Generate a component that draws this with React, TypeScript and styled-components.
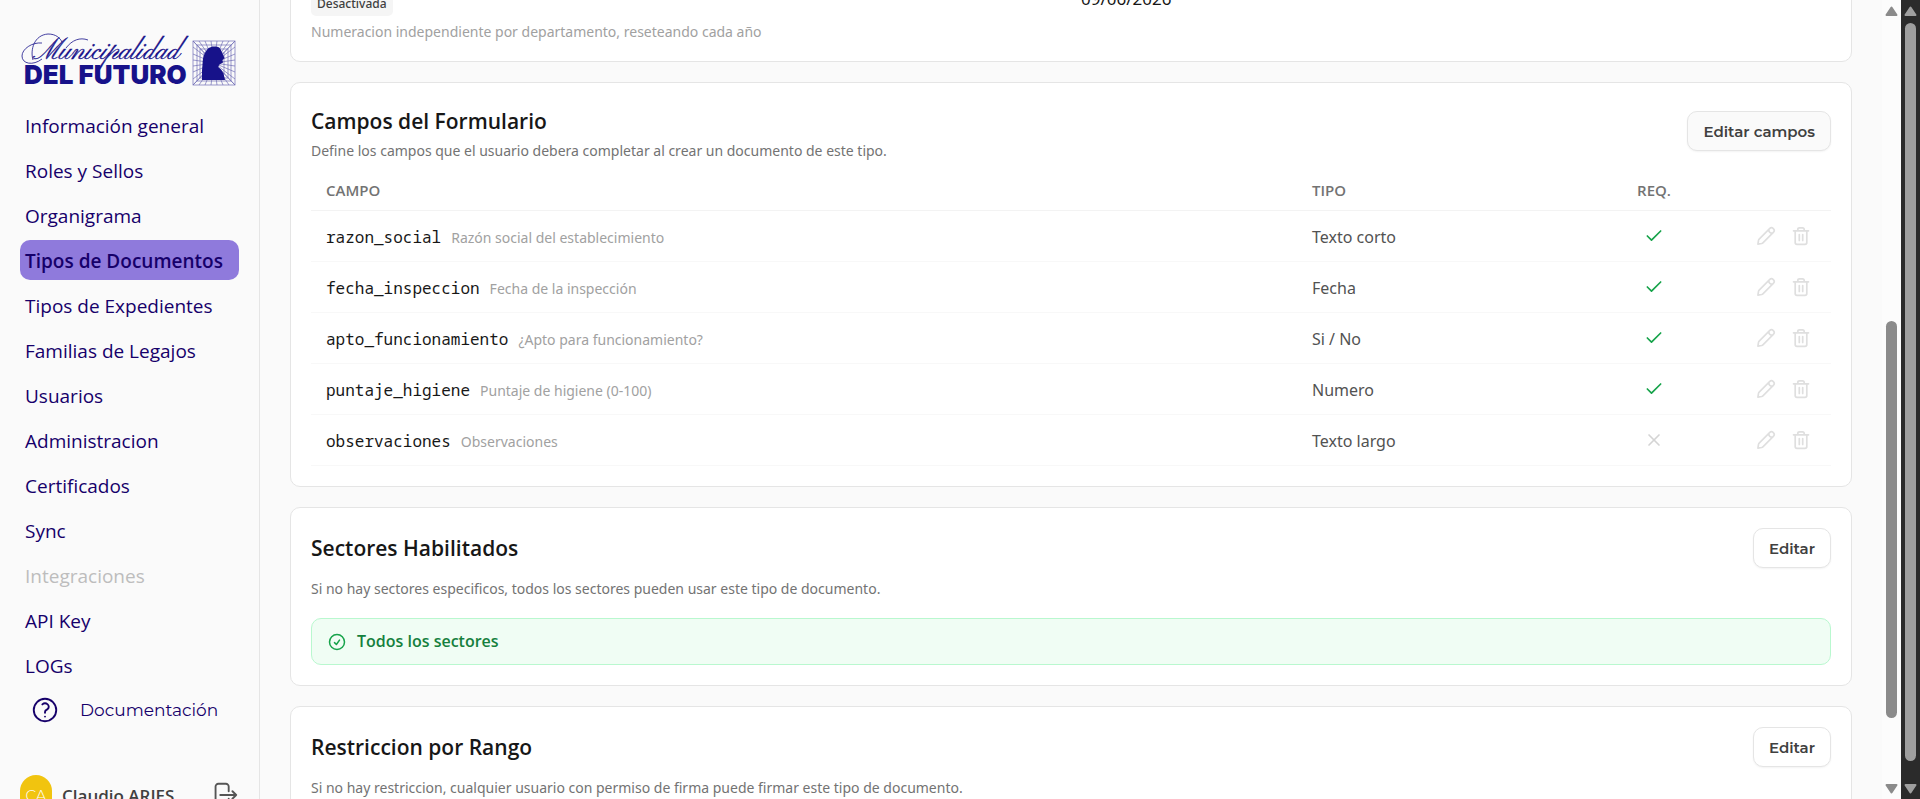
import React from 'react';
import styled, { createGlobalStyle, css } from 'styled-components';
import { Check, X } from 'lucide-react';

const sans = '"Noto Sans", "Open Sans", sans-serif';
const heading = '"Open Sans", "Noto Sans", sans-serif';
const display = 'Montserrat, Inter, sans-serif';
const mono = '"Noto Sans Mono", "Liberation Mono", monospace';

const GlobalStyle = createGlobalStyle`
  *, *::before, *::after { box-sizing: border-box; }
  body { margin: 0; background: #fafafa; font-family: ${sans}; color: #171717; }
  h2, p, ul { margin: 0; padding: 0; }
`;

const Page = styled.div`
  display: flex;
  height: 100vh;
  overflow: hidden;
`;

/* ---------- Sidebar ---------- */

const Sidebar = styled.aside`
  flex: none;
  width: 260px;
  display: flex;
  flex-direction: column;
  padding: 30px 20px 0;
  border-right: 1px solid #e5e5e5;
  overflow: hidden;
`;

const Logo = styled.svg`
  flex: none;
  display: block;
  width: 100%;
  height: 60px;
  overflow: visible;
`;

const NavList = styled.ul`
  flex: none;
  display: flex;
  flex-direction: column;
  gap: 5px;
  margin-top: 15px;
  list-style: none;
`;

const NavLink = styled.a<{ $active?: boolean; $disabled?: boolean }>`
  display: block;
  height: 40px;
  padding: 0 5px;
  border-radius: 10px;
  font-family: ${heading};
  font-size: 19px;
  line-height: 42px;
  white-space: nowrap;
  text-decoration: none;
  color: ${(p) => (p.$disabled ? '#bdbdbd' : '#16006a')};
  ${(p) =>
    p.$active &&
    css`
      background: #8f7adc;
      font-weight: 600;
    `}
`;

const DocsLink = styled.a`
  flex: none;
  display: flex;
  align-items: center;
  gap: 20px;
  height: 40px;
  margin-top: 5px;
  padding-left: 10px;
  font-family: ${display};
  font-size: 17px;
  font-weight: 400;
  color: #16006a;
  text-decoration: none;
`;

const UserRow = styled.div`
  flex: none;
  display: flex;
  align-items: center;
  height: 40px;
  margin-top: 45px;
`;

const Avatar = styled.span`
  display: flex;
  align-items: center;
  justify-content: center;
  width: 32px;
  height: 40px;
  border-radius: 16px;
  background: #f1c40f;
  color: #fff;
  font-family: ${display};
  font-size: 15px;
  font-weight: 300;
`;

const UserName = styled.span`
  flex: 1;
  margin-left: 10px;
  font-family: ${heading};
  font-size: 17px;
  font-weight: 600;
  color: #404040;
`;

const PlainButton = styled.button`
  display: flex;
  align-items: center;
  justify-content: center;
  width: 30px;
  height: 30px;
  padding: 0;
  border: 0;
  background: none;
  color: #555;
`;

const StrokeIcon = styled.svg<{ $size: number; $stroke?: number }>`
  flex: none;
  display: block;
  width: ${(p) => p.$size}px;
  height: ${(p) => p.$size}px;
  fill: none;
  stroke: currentColor;
  stroke-width: ${(p) => p.$stroke ?? 1.5};
  stroke-linecap: round;
  stroke-linejoin: round;
`;

/* ---------- Content ---------- */

const Main = styled.main`
  flex: 1;
  min-width: 0;
  padding: 0 30px;
  overflow: hidden;
`;

/* Scrolled so that the first card is partly above the window. */
const Scrolled = styled.div`
  display: flex;
  flex-direction: column;
  gap: 20px;
  margin-top: -35px;
`;

const Card = styled.section`
  padding: 20px;
  border: 1px solid #e5e5e5;
  border-radius: 10px;
  background: #fff;
`;

const InfoGrid = styled.div`
  display: grid;
  grid-template-columns: 1fr 1fr;
  gap: 20px;
  align-items: end;
  height: 30px;
`;

const Badge = styled.span`
  justify-self: start;
  padding: 0 6px;
  border-radius: 5px;
  background: #f5f5f5;
  color: #404040;
  font-size: 12px;
  font-weight: 500;
  line-height: 24px;
`;

const DateValue = styled.span`
  align-self: start;
  font-size: 17px;
  line-height: 26px;
`;

const Note = styled.p`
  padding-top: 7px;
  font-size: 14px;
  line-height: 18px;
  color: #a1a1a1;
`;

const CardHeader = styled.header<{ $top?: boolean }>`
  display: flex;
  align-items: ${(p) => (p.$top ? 'flex-start' : 'center')};
  justify-content: space-between;
`;

const Title = styled.h2`
  font-family: ${heading};
  font-size: 21px;
  font-weight: 600;
  line-height: 36px;
`;

const Description = styled.p<{ $spaced?: boolean }>`
  margin: ${(p) => (p.$spaced ? '9px 0 17px' : '0')};
  font-size: 14px;
  line-height: 24px;
  color: #737373;
`;

const Button = styled.button<{ $muted?: boolean }>`
  height: 40px;
  margin-top: ${(p) => (p.$muted ? '8px' : '0')};
  padding: 0 15px;
  border: 1px solid #e5e5e5;
  border-radius: 10px;
  background: ${(p) => (p.$muted ? '#fafafa' : '#fff')};
  box-shadow: 0 1px 2px rgba(0, 0, 0, 0.05);
  font-family: ${display};
  font-size: 15px;
  font-weight: 600;
  color: #404040;
`;

const Table = styled.table`
  width: 100%;
  margin-top: 8px;
  table-layout: fixed;
  border-collapse: separate;
  border-spacing: 0;
`;

const HeadCell = styled.th<{ $width?: number; $center?: boolean }>`
  width: ${(p) => (p.$width ? `${p.$width}px` : 'auto')};
  height: 40px;
  padding: 0 15px 2px;
  border-bottom: 1px solid #f3f3f3;
  font-family: ${heading};
  font-size: 15px;
  font-weight: 600;
  text-align: ${(p) => (p.$center ? 'center' : 'left')};
  color: #737373;
`;

const Cell = styled.td`
  height: 51px;
  padding: 0 15px;
  border-bottom: 1px solid #f8f8f8;
  font-size: 16px;
  color: #525252;
`;

const TextCell = styled(Cell)`
  padding-top: 2px;
`;

const FieldName = styled.code`
  margin-right: 10px;
  font-family: ${mono};
  font-size: 16px;
  color: #171717;
`;

const FieldLabel = styled.span`
  font-size: 14px;
  color: #a1a1a1;
`;

const Flag = styled.span<{ $on: boolean }>`
  display: flex;
  justify-content: center;
  color: ${(p) => (p.$on ? '#16a34a' : '#d4d4d4')};
`;

const RowActions = styled.div`
  display: flex;
  justify-content: flex-end;
  gap: 5px;
`;

const RowButton = styled(PlainButton)`
  color: #dfdfdf;
`;

const Notice = styled.div`
  display: flex;
  align-items: center;
  gap: 10px;
  padding: 10px 15px;
  border: 1px solid #b9f8cf;
  border-radius: 10px;
  background: #f0fdf4;
  color: #16a34a;
`;

const NoticeText = styled.span`
  font-family: ${heading};
  font-size: 16px;
  font-weight: 600;
  line-height: 25px;
  color: #15803d;
`;

/* ---------- Scroll bars ---------- */

const ScrollBar = styled.div<{ $dark?: boolean }>`
  flex: none;
  display: flex;
  flex-direction: column;
  align-items: center;
  width: 19px;
  background: ${(p) => (p.$dark ? '#2b2b2b' : '#fcfcfc')};
  color: ${(p) => (p.$dark ? '#9f9f9f' : '#8b8b8b')};
`;

const Arrow = styled.svg`
  flex: none;
  width: 19px;
  height: 23px;
  fill: currentColor;
  stroke: currentColor;
  stroke-width: 2;
  stroke-linejoin: round;
`;

const Gap = styled.div<{ $share: number }>`
  flex: ${(p) => p.$share} 0 0;
`;

const Thumb = styled.div<{ $share: number }>`
  flex: ${(p) => p.$share} 0 0;
  width: 11px;
  border-radius: 6px;
  background: currentColor;
`;

function Scroll({ before, thumb, after, dark }: { before: number; thumb: number; after: number; dark?: boolean }) {
  return (
    <ScrollBar $dark={dark} aria-hidden="true">
      <Arrow viewBox="0 0 19 23"><path d="M9.5 7.5 14.5 15h-10z" /></Arrow>
      <Gap $share={before} />
      <Thumb $share={thumb} />
      <Gap $share={after} />
      <Arrow viewBox="0 0 19 23"><path d="M9.5 16.5 4.5 9h10z" /></Arrow>
    </ScrollBar>
  );
}

/* ---------- Drawings ---------- */

const ink = '#17128a';

function BrandLogo() {
  const rays = [173, 179, 185, 191, 197, 203, 209, 215];
  const rows = [11, 17, 24, 30, 36, 42, 49, 55];
  return (
    <Logo viewBox="0 0 219 60" preserveAspectRatio="xMinYMin meet" role="img" aria-label="Municipalidad del Futuro">
      <path
        fill="none"
        stroke={ink}
        strokeWidth="0.8"
        d="M22 13C12 12 2 19 2 26C2 34 13 36 22 29M13 30C10 20 14 5 28 4C36 4 40 8 42 12M46 18C52 10 60 7 68 10"
      />
      <text x="13" y="29" fontFamily="'Pinyon Script', 'Great Vibes', 'Liberation Serif', serif" fontSize="28" fill={ink} stroke={ink} strokeWidth="0.3">
        Municipalidad
      </text>
      <text x="4" y="54" fontFamily="Inter, sans-serif" fontWeight="900" fontSize="26" fill={ink}>
        DEL FUTURO
      </text>
      <g stroke={ink} fill="none" strokeWidth="0.7" opacity="0.6">
        <rect x="173" y="11" width="42" height="44" />
        <rect x="177" y="15" width="34" height="36" />
        <rect x="180" y="19" width="28" height="29" />
        <rect x="184" y="23" width="20" height="21" />
        {rays.map((x) => <path key={x} d={`M${x} 11 194 33M${x} 55 194 33`} />)}
        {rows.map((y) => <path key={y} d={`M173 ${y} 194 33M215 ${y} 194 33`} />)}
      </g>
      <path
        fill={ink}
        d="M182 50V40C183 34 182 28 185 23C187 18 191 16 195 16.500C199 16 201 19 202 22.500L204.500 28L202.500 30L203 32.500L199.500 34.500L198 37L201 39.500L203.500 43.500L205 50Z"
      />
    </Logo>
  );
}

const QuestionIcon = () => (
  <StrokeIcon $size={30} viewBox="0 0 24 24">
    <path d="M9.879 7.519c1.171-1.025 3.071-1.025 4.242 0 1.172 1.025 1.172 2.687 0 3.712-.203.179-.43.326-.67.442-.745.361-1.45.999-1.45 1.827v.75M21 12a9 9 0 1 1-18 0 9 9 0 0 1 18 0Zm-9 5.250h.008v.008H12v-.008Z" />
  </StrokeIcon>
);

const LogoutIcon = () => (
  <StrokeIcon $size={30} viewBox="0 0 24 24">
    <path d="M15.750 9V5.250A2.250 2.250 0 0 0 13.500 3h-6a2.250 2.250 0 0 0-2.250 2.250v13.500A2.250 2.250 0 0 0 7.500 21h6a2.250 2.250 0 0 0 2.250-2.250V15m3 0 3-3m0 0-3-3m3 3H9" />
  </StrokeIcon>
);

const PencilIcon = () => (
  <StrokeIcon $size={20} $stroke={2} viewBox="0 0 24 24">
    <path d="M2.300 21.700 3 17.200Q3.200 16.300 3.800 15.700L16.300 3.200a3.150 3.150 0 0 1 4.500 4.500L8.300 20.200Q7.700 20.800 6.800 21ZM15.200 4.600Q15.400 8.600 19.400 8.800" />
  </StrokeIcon>
);

const TrashIcon = () => (
  <StrokeIcon $size={20} $stroke={1.7} viewBox="0 0 20 20">
    <path d="M2.500 4.800h15M4.200 4.800v11.700q0 1.800 1.800 1.800h8q1.800 0 1.800-1.800V4.800M6.800 4.800V3.500q0-1.700 1.700-1.700h3q1.700 0 1.700 1.700v1.300M8.300 8.500v6M11.700 8.500v6" />
  </StrokeIcon>
);

const CheckCircleIcon = () => (
  <StrokeIcon $size={20} $stroke={1.8} viewBox="0 0 24 24">
    <path d="M9 12.750 11.250 15 15 9.750M21 12a9 9 0 1 1-18 0 9 9 0 0 1 18 0Z" />
  </StrokeIcon>
);

/* ---------- Data ---------- */

const navItems = [
  'Información general',
  'Roles y Sellos',
  'Organigrama',
  'Tipos de Documentos',
  'Tipos de Expedientes',
  'Familias de Legajos',
  'Usuarios',
  'Administracion',
  'Certificados',
  'Sync',
  'Integraciones',
  'API Key',
  'LOGs',
];

const fields = [
  { name: 'razon_social', label: 'Razón social del establecimiento', type: 'Texto corto', required: true },
  { name: 'fecha_inspeccion', label: 'Fecha de la inspección', type: 'Fecha', required: true },
  { name: 'apto_funcionamiento', label: '¿Apto para funcionamiento?', type: 'Si / No', required: true },
  { name: 'puntaje_higiene', label: 'Puntaje de higiene (0-100)', type: 'Numero', required: true },
  { name: 'observaciones', label: 'Observaciones', type: 'Texto largo', required: false },
];

export default function App() {
  return (
    <Page>
      <GlobalStyle />
      <Sidebar>
        <BrandLogo />
        <nav>
          <NavList>
            {navItems.map((item) => (
              <li key={item}>
                <NavLink href="#" $active={item === 'Tipos de Documentos'} $disabled={item === 'Integraciones'}>
                  {item}
                </NavLink>
              </li>
            ))}
          </NavList>
        </nav>
        <DocsLink href="#">
          <QuestionIcon />
          Documentación
        </DocsLink>
        <UserRow>
          <Avatar>CA</Avatar>
          <UserName>Claudio ARIES</UserName>
          <PlainButton type="button" aria-label="Cerrar sesión">
            <LogoutIcon />
          </PlainButton>
        </UserRow>
      </Sidebar>

      <Main>
        <Scrolled>
          <Card>
            <InfoGrid>
              <Badge>Desactivada</Badge>
              <DateValue>09/06/2026</DateValue>
            </InfoGrid>
            <Note>Numeracion independiente por departamento, reseteando cada año</Note>
          </Card>

          <Card>
            <CardHeader $top>
              <div>
                <Title>Campos del Formulario</Title>
                <Description>
                  Define los campos que el usuario debera completar al crear un documento de este tipo.
                </Description>
              </div>
              <Button type="button" $muted>Editar campos</Button>
            </CardHeader>
            <Table>
              <thead>
                <tr>
                  <HeadCell scope="col">CAMPO</HeadCell>
                  <HeadCell scope="col" $width={300}>TIPO</HeadCell>
                  <HeadCell scope="col" $width={114} $center>REQ.</HeadCell>
                  <HeadCell scope="col" $width={120} aria-label="Acciones" />
                </tr>
              </thead>
              <tbody>
                {fields.map((field) => (
                  <tr key={field.name}>
                    <TextCell>
                      <FieldName>{field.name}</FieldName>
                      <FieldLabel>{field.label}</FieldLabel>
                    </TextCell>
                    <TextCell>{field.type}</TextCell>
                    <Cell>
                      <Flag $on={field.required}>
                        {field.required ? <Check size={20} /> : <X size={20} />}
                      </Flag>
                    </Cell>
                    <Cell>
                      <RowActions>
                        <RowButton type="button" aria-label={`Editar ${field.name}`}><PencilIcon /></RowButton>
                        <RowButton type="button" aria-label={`Eliminar ${field.name}`}><TrashIcon /></RowButton>
                      </RowActions>
                    </Cell>
                  </tr>
                ))}
              </tbody>
            </Table>
          </Card>

          <Card>
            <CardHeader>
              <Title>Sectores Habilitados</Title>
              <Button type="button">Editar</Button>
            </CardHeader>
            <Description $spaced>
              Si no hay sectores especificos, todos los sectores pueden usar este tipo de documento.
            </Description>
            <Notice>
              <CheckCircleIcon />
              <NoticeText>Todos los sectores</NoticeText>
            </Notice>
          </Card>

          <Card>
            <CardHeader>
              <Title>Restriccion por Rango</Title>
              <Button type="button">Editar</Button>
            </CardHeader>
            <Description $spaced>
              Si no hay restriccion, cualquier usuario con permiso de firma puede firmar este tipo de documento.
            </Description>
          </Card>
        </Scrolled>
      </Main>

      <Scroll before={298} thumb={397} after={58} />
      <Scroll before={0} thumb={738} after={15} dark />
    </Page>
  );
}
